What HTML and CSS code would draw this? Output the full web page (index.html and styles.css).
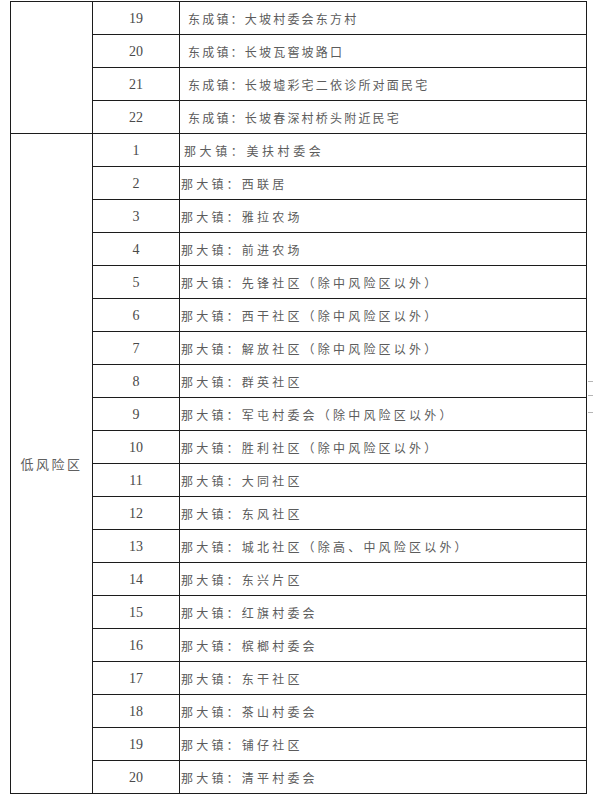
FILE: index.html
```html
<!DOCTYPE html>
<html lang="zh-CN">
<head>
<meta charset="utf-8">
<title>风险区列表</title>
<link rel="stylesheet" href="styles.css">
</head>
<body>
<div class="page">
  <table class="risk">
    <colgroup>
      <col class="c-level">
      <col class="c-num">
      <col class="c-place">
    </colgroup>
    <tbody>
      <tr><td class="level" rowspan="4"></td><td class="num">19</td><td class="place dc">东成镇：大坡村委会东方村</td></tr>
      <tr><td class="num">20</td><td class="place dc">东成镇：长坡瓦窖坡路口</td></tr>
      <tr><td class="num">21</td><td class="place dc">东成镇：长坡墟彩宅二依诊所对面民宅</td></tr>
      <tr><td class="num">22</td><td class="place dc">东成镇：长坡春深村桥头附近民宅</td></tr>
      <tr><td class="level" rowspan="20">低风险区</td><td class="num">1</td><td class="place wide">那大镇：美扶村委会</td></tr>
      <tr><td class="num">2</td><td class="place">那大镇：西联居</td></tr>
      <tr><td class="num">3</td><td class="place">那大镇：雅拉农场</td></tr>
      <tr><td class="num">4</td><td class="place">那大镇：前进农场</td></tr>
      <tr><td class="num">5</td><td class="place">那大镇：先锋社区（除中风险区以外）</td></tr>
      <tr><td class="num">6</td><td class="place">那大镇：西干社区（除中风险区以外）</td></tr>
      <tr><td class="num">7</td><td class="place">那大镇：解放社区（除中风险区以外）</td></tr>
      <tr><td class="num">8</td><td class="place">那大镇：群英社区</td></tr>
      <tr><td class="num">9</td><td class="place">那大镇：军屯村委会（除中风险区以外）</td></tr>
      <tr><td class="num">10</td><td class="place">那大镇：胜利社区（除中风险区以外）</td></tr>
      <tr><td class="num">11</td><td class="place">那大镇：大同社区</td></tr>
      <tr><td class="num">12</td><td class="place">那大镇：东风社区</td></tr>
      <tr><td class="num">13</td><td class="place">那大镇：城北社区（除高、中风险区以外）</td></tr>
      <tr><td class="num">14</td><td class="place">那大镇：东兴片区</td></tr>
      <tr><td class="num">15</td><td class="place">那大镇：红旗村委会</td></tr>
      <tr><td class="num">16</td><td class="place">那大镇：槟榔村委会</td></tr>
      <tr><td class="num">17</td><td class="place">那大镇：东干社区</td></tr>
      <tr><td class="num">18</td><td class="place">那大镇：茶山村委会</td></tr>
      <tr><td class="num">19</td><td class="place">那大镇：铺仔社区</td></tr>
      <tr><td class="num">20</td><td class="place">那大镇：清平村委会</td></tr>
    </tbody>
  </table>
  <div class="edge-mark" aria-hidden="true">
    <span class="tick t1"></span>
    <span class="tick t2"></span>
    <span class="tick t3"></span>
  </div>
</div>
</body>
</html>
```

FILE: styles.css
```css
html, body {
  margin: 0;
  padding: 0;
  background: #ffffff;
}

.page {
  position: relative;
  padding: 1px 0 0 10px;
  width: 593px;
  height: 797px;
  box-sizing: border-box;
  overflow: hidden;
}

.risk {
  border-collapse: collapse;
  table-layout: fixed;
  width: 576px;
  font-family: "Noto Sans CJK SC", "Liberation Serif", serif;
  color: #5c5c5c;
}

.c-level { width: 82px; }
.c-num { width: 87px; }
.c-place { width: 407px; }

.risk td {
  border: 1px solid #1c1c1c;
  height: 32px;
  padding: 0;
  box-sizing: border-box;
  vertical-align: middle;
}

.risk tr {
  height: 33px;
}

.level {
  text-align: center;
  font-size: 13px;
  letter-spacing: 2.5px;
  padding-right: 4px;
  color: #606060;
}

.num {
  text-align: center;
  font-family: "Liberation Serif", serif;
  font-size: 14px;
  color: #4a4a4a;
  padding-top: 1px !important;
}

.place {
  font-size: 12px;
  letter-spacing: 3.2px;
  padding-left: 1px !important;
  white-space: nowrap;
  color: #5c5c5c;
}

.place.dc {
  padding-left: 8px !important;
  letter-spacing: 2.2px;
}

.place.wide {
  padding-left: 4px !important;
  letter-spacing: 3.6px;
}

.edge-mark {
  position: absolute;
  left: 587px;
  top: 380px;
  width: 6px;
  height: 33px;
  border-right: 1px solid #eeeeee;
}

.tick {
  position: absolute;
  left: 1px;
  width: 5px;
  height: 1px;
  background: #b5b5b5;
}

.t1 { top: 1px; }
.t2 { top: 15px; }
.t3 { top: 32px; }
```
